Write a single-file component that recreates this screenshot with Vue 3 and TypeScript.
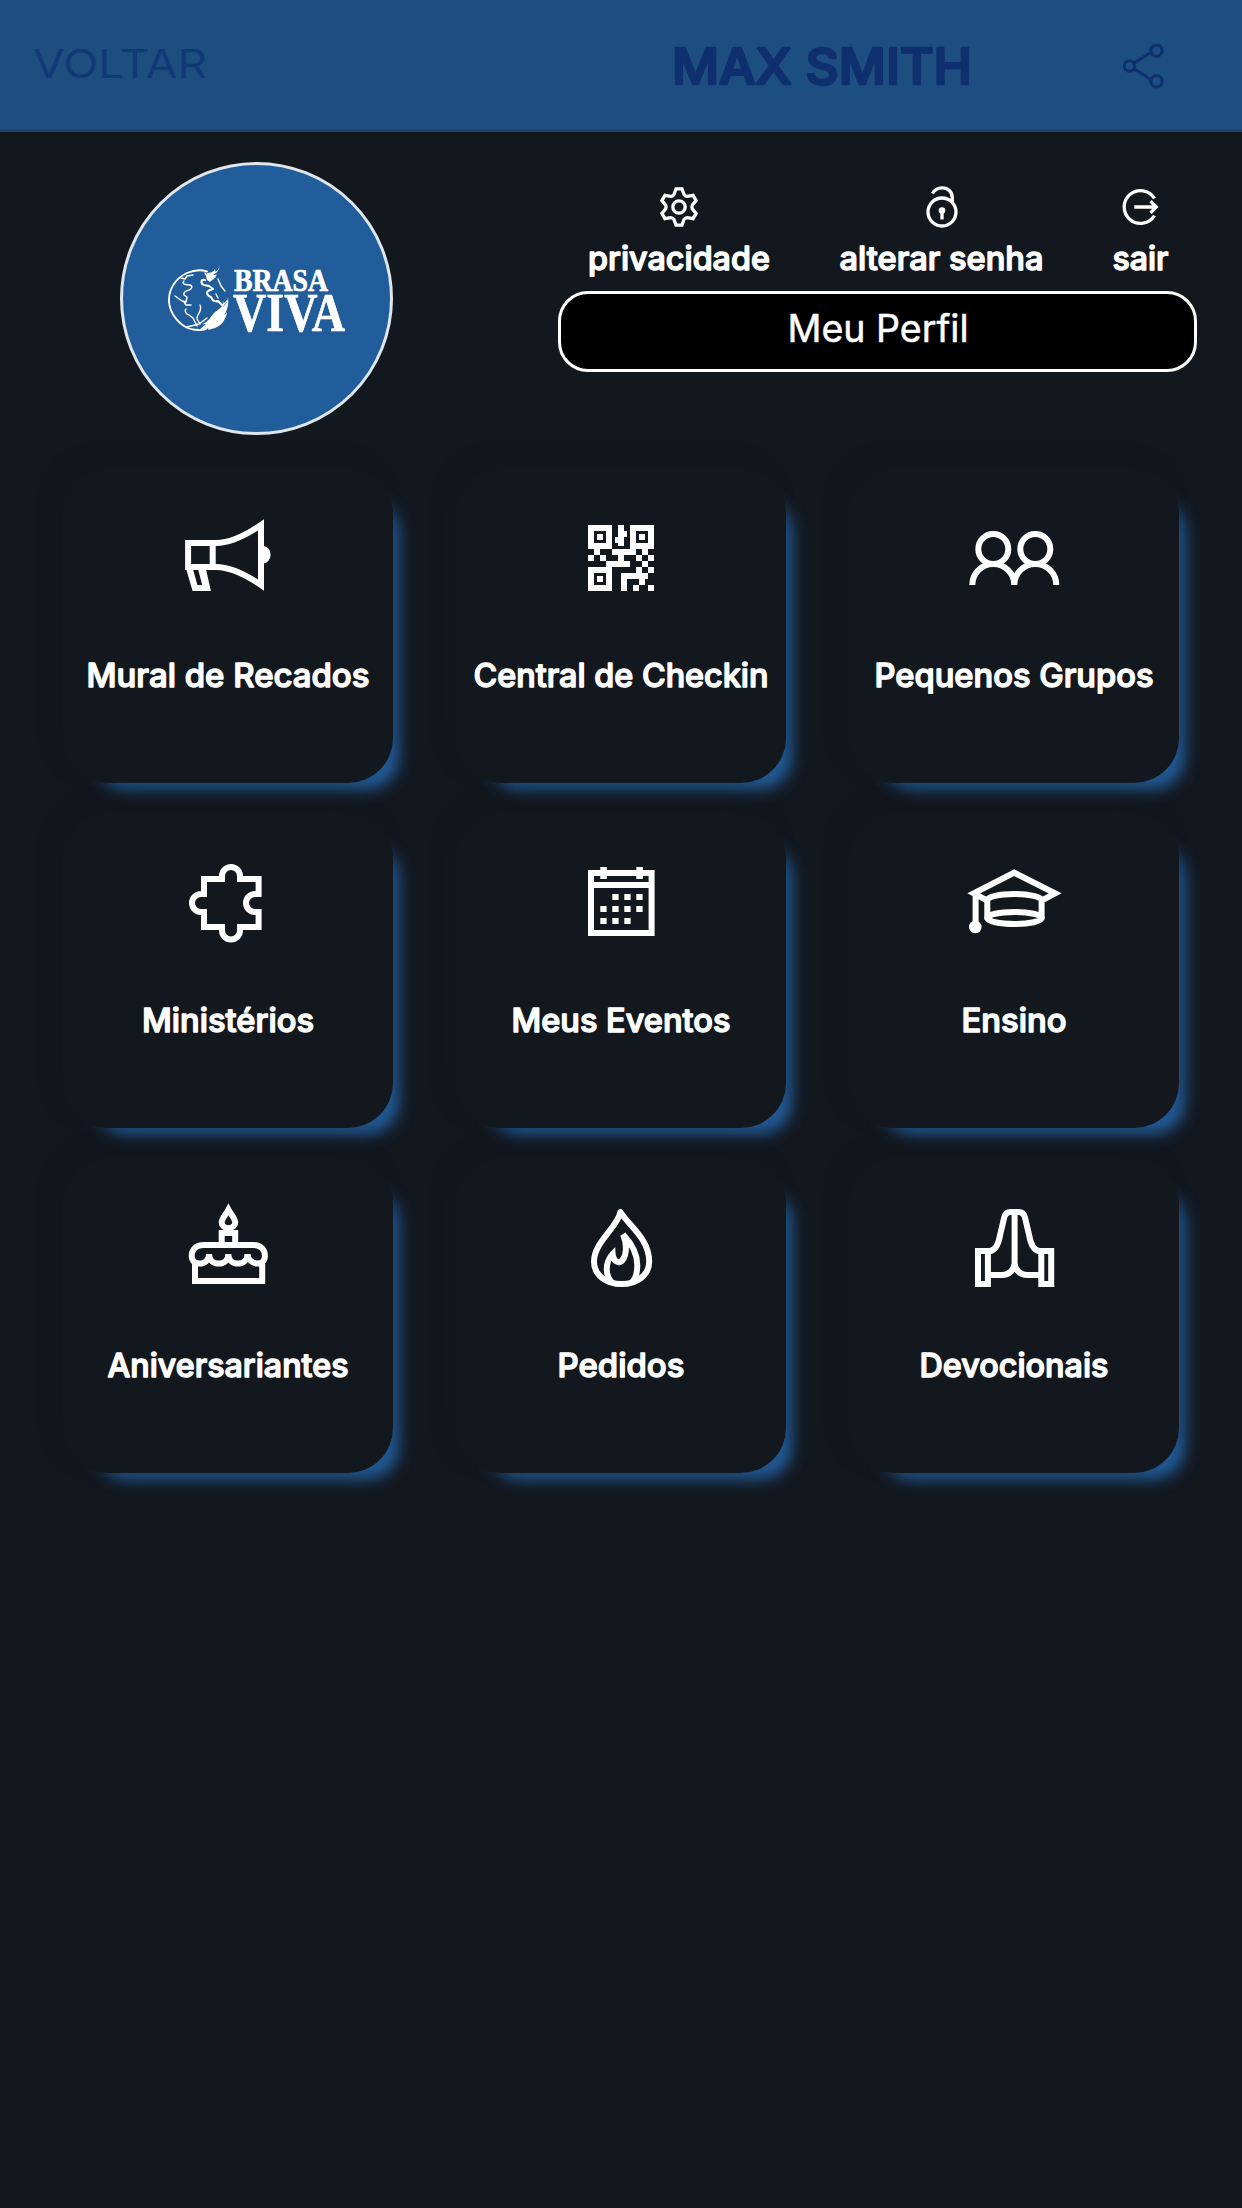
<script setup lang="ts">
interface Tile {
  id: string
  label: string
  width: number
}

// width: drawn length of each label in pixels
const tiles: Tile[] = [
  { id: 'megaphone', label: 'Mural de Recados', width: 283 },
  { id: 'qr', label: 'Central de Checkin', width: 295 },
  { id: 'people', label: 'Pequenos Grupos', width: 279 },
  { id: 'puzzle', label: 'Ministérios', width: 172 },
  { id: 'calendar', label: 'Meus Eventos', width: 219 },
  { id: 'cap', label: 'Ensino', width: 105 },
  { id: 'cake', label: 'Aniversariantes', width: 241 },
  { id: 'fire', label: 'Pedidos', width: 127 },
  { id: 'pray', label: 'Devocionais', width: 189 },
]

const qrCells: number[][] = [
  [15, 5, 2, 7], [17, 7, 1, 2], [14, 9, 1, 2],
  [7, 13, 2, 2], [13, 13, 8, 2], [23, 13, 2, 2],
  [5, 15, 2, 2], [9, 15, 2, 2], [15, 15, 2, 2], [21, 15, 2, 2], [25, 15, 2, 2],
  [11, 17, 8, 2], [23, 17, 2, 2],
  [21, 19, 2, 2], [25, 19, 2, 2],
  [16, 21, 9, 2], [16, 23, 2, 4], [22, 23, 2, 2],
  [20, 25, 2, 2], [25, 25, 2, 2],
]
const finders: number[][] = [[5, 5], [19, 5], [5, 19]]
const days: number[][] = [
  [13, 13], [17, 13], [21, 13],
  [9, 17], [13, 17], [17, 17], [21, 17],
  [9, 21], [13, 21], [17, 21],
]
</script>

<template>
  <div class="page">
    <header class="bar">
      <svg class="back" width="174" height="60">
        <text x="-1" y="43" textLength="174" lengthAdjust="spacingAndGlyphs">VOLTAR</text>
      </svg>
      <svg class="title" width="304" height="60">
        <text x="152" y="49" text-anchor="middle" textLength="300" lengthAdjust="spacingAndGlyphs">MAX SMITH</text>
      </svg>
      <svg class="share" width="44" height="48" viewBox="0 0 44 48">
        <path d="M12.5 21.5 29 11M12.5 26.5 29 37" />
        <circle cx="8.5" cy="24" r="5.2" />
        <circle cx="35.5" cy="8.6" r="5.7" />
        <circle cx="35.5" cy="39.3" r="5.7" />
      </svg>
    </header>

    <section class="profile">
      <div class="avatar">
        <svg width="180" height="72" viewBox="0 0 180 72">
          <g fill="none" stroke="#fff" stroke-linecap="round" stroke-linejoin="round">
            <path stroke-width="1.9" d="M39 6.500C33 4.500 26 5 19 8 8 13 1.500 23 1 33.500 0.500 45 7 55 16 61c4.500 3 10 4 15 4" />
            <path stroke-width="1.4" d="M13 13l4 1 2-3 6-1M16 16c-3 3 2 4 6 4 3 1 2 4-1 5-4 1-6 3-5 5l3 2-1 5-4-1-7-5M16 37l2 3 5 0M18 44c-2 2 0 5 3 6l4 3 4 8M32 40c3 6-4 10-3 14l3 5M19 62l12-3 8-6M50 14l3 7 4 5M55 40l4-4M37 8l2 3M50 33l-2-4" />
            <path stroke-width="2.100" d="M37 15c-5-1-4 4-1 5l5 1 4 3c-4 1-8 3-5 6 1 2 4 1 4 4 1 2 4 3 6 2l4 4" />
          </g>
          <path fill="#fff" d="M52 0c-1 6-3 8-7 9.500 2 1 4 0 4-1-1 4-3 6-5 6.500l-2 2-3-2-1-4 1-3c4 0 6-1 8-4 0 1 1 2 0 3 2-1 4-3 5-7z" />
          <path fill="#fff" d="M60 32c1 8-1 14-4 18 2-1 2-2 3-3-1 8-6 14-12 16l-7 2c1-1 0-2 0-2-2 3-6 3-10 3l8-7c-2 0-4 0-5 1 8-4 9-7 12-11 4-4 9-6 10-10 1-1 0-2 0-3 2 2 1 4 0 6 3-3 5-6 5-10z" />
          <text class="logo" x="66" y="26" font-size="32.500" textLength="94" lengthAdjust="spacingAndGlyphs">BRASA</text>
          <text class="logo" x="65" y="65.500" font-size="54" textLength="112" lengthAdjust="spacingAndGlyphs">VIVA</text>
        </svg>
      </div>

      <div class="account">
        <nav class="actions">
          <a class="action">
            <svg width="40" height="44" viewBox="-20 -22 40 44">
              <path d="M-3-18.200H3L5-12.500Q6.500-10.500 8.300-10.600L14.100-11.600 17.100-6.400 13.300-1.900Q12.600 0 13.300 1.900L17.100 6.400 14.100 11.600 8.300 10.600Q6.500 10.500 5 12.500L3 18.200H-3L-5 12.500Q-6.500 10.500-8.300 10.600L-14.100 11.600-17.100 6.400-13.300 1.900Q-12.600 0-13.300-1.900L-17.100-6.400-14.100-11.600-8.300-10.600Q-6.500-10.500-5-12.500Z" />
              <circle r="6.200" />
            </svg>
            <svg class="caption" width="184" height="44">
              <text x="92" y="33" text-anchor="middle" textLength="182" lengthAdjust="spacingAndGlyphs">privacidade</text>
            </svg>
          </a>
          <a class="action">
            <svg width="40" height="44" viewBox="0 0 40 44">
              <path d="M10.500 8.500C12.500 4.800 16 2.800 20 2.800c6 0 10.300 4 10.300 10V17" />
              <circle cx="20" cy="27" r="14" />
              <circle class="solid" cx="20" cy="25.500" r="3.300" />
              <path d="M20 26v8.500" />
            </svg>
            <svg class="caption" width="206" height="44">
              <text x="102.500" y="33" text-anchor="middle" textLength="204" lengthAdjust="spacingAndGlyphs">alterar senha</text>
            </svg>
          </a>
          <a class="action">
            <svg width="40" height="44" viewBox="-20 -22 40 44">
              <path d="M14.500-8.700A16.400 16.400 0 1 0 14.500 8.700M-5.700 0H16M10.500-5.800 16.300 0 10.500 5.800" />
            </svg>
            <svg class="caption" width="60" height="44">
              <text x="30.500" y="33" text-anchor="middle" textLength="56" lengthAdjust="spacingAndGlyphs">sair</text>
            </svg>
          </a>
        </nav>
        <button class="perfil">
          <svg width="184" height="50">
            <text x="92" y="36" text-anchor="middle" textLength="181" lengthAdjust="spacingAndGlyphs">Meu Perfil</text>
          </svg>
        </button>
      </div>
    </section>

    <main class="grid">
      <article v-for="tile in tiles" :key="tile.id" class="tile">
        <svg class="icon" width="96" height="96" viewBox="0 0 32 32">
          <template v-if="tile.id === 'megaphone'">
            <path d="M2.700 11H12C17.500 11 23 7.700 27 5V25C23 22.300 17.500 19 12 19H2.700ZM10.900 11V19" />
            <path class="solid" fill-rule="evenodd" d="M27.800 12a2.400 2.900 0 0 1 0 5.800zM2 19.500 4.200 27H10.300L8.500 19ZM4.400 20H6.100L7.400 25H5.800Z" />
          </template>
          <template v-else-if="tile.id === 'qr'">
            <g class="solid">
              <path v-for="f in finders" :key="f.join()" fill-rule="evenodd" :d="`M${f[0]} ${f[1]}h8v8h-8zm2 2v4h4v-4zm1 1h2v2h-2z`" />
              <rect v-for="c in qrCells" :key="c.join()" :x="c[0]" :y="c[1]" :width="c[2]" :height="c[3]" />
            </g>
          </template>
          <template v-else-if="tile.id === 'people'">
            <circle cx="9.100" cy="13" r="5" />
            <circle cx="23.100" cy="13" r="5" />
            <path d="M2.100 25a7 7 0 0 1 14 0 7 7 0 0 1 14 0" stroke-linejoin="bevel" />
          </template>
          <template v-else-if="tile.id === 'puzzle'">
            <path d="M8 8H14V7a3 3 0 0 1 6 0V8H26.200V13H25a3 3 0 0 0 0 6H26.200V24H20V25.200a3 3 0 0 1-6 0V24H8V19H7a3 3 0 0 1 0-6H8Z" />
          </template>
          <template v-else-if="tile.id === 'calendar'">
            <path d="M6 6H26.200V26H6ZM6 10H26.200" />
            <g class="solid">
              <rect x="9.100" y="4" width="2.200" height="4" />
              <rect x="21.100" y="4" width="2.200" height="4" />
              <rect v-for="d in days" :key="d.join()" :x="d[0] + 0.1" :y="d[1]" width="2.100" height="2" />
            </g>
          </template>
          <template v-else-if="tile.id === 'cap'">
            <path d="M7.300 15.300 2.600 12.800 16.100 5.900 29.700 12.800 25 15.300M3.200 13V23M7.100 21.500V15C7.100 14 11.100 13 16.100 13S25.200 14 25.200 15V21.500" />
            <ellipse cx="16.150" cy="21" rx="9.050" ry="2" />
            <circle class="solid" cx="3.100" cy="24" r="2.100" />
          </template>
          <template v-else-if="tile.id === 'cake'">
            <path d="M8 15H24.300C27.200 15 28.300 16.700 28.300 18.700 28.300 20.300 27.200 21.200 25.800 21.200S22.500 20 22.500 18C22.500 20 21.100 21.200 19.300 21.200S16.100 20 16.100 18C16.100 20 14.700 21.200 12.900 21.200S9.700 20 9.700 18C9.700 20 8.200 21.200 6.600 21.200S3.900 20.300 3.900 18.700C3.900 16.700 5.100 15 8 15ZM5 20.500V27H27.400V20.500M13.900 14.500V11H18.400V14.500" />
            <path d="M16.150 3.200C15.200 5 13.900 6.200 13.900 7.500 13.900 8.500 14.900 9.400 16.150 9.400S18.400 8.500 18.400 7.500C18.400 6.200 17.100 5 16.150 3.200Z" />
          </template>
          <template v-else-if="tile.id === 'fire'">
            <path d="M15.800 4C15 9 7 14 7 20.500 7 25 11 28 16.200 28S25.400 25 25.400 20.500C25.400 13 19 9 15.800 4Z" stroke-linejoin="round" />
            <path d="M13 27.500C10.500 25 10.800 20.500 13.200 18 13.300 19.700 14.300 21 15.700 20.700 17.900 19.500 18.200 15 16.700 11.500 19.500 14.500 21.700 18.500 21.400 22.500 21.300 25 20.700 26.500 19.600 27.500" />
          </template>
          <template v-else>
            <path d="M4 17H7.300V28H4ZM25.100 17H28.400V28H25.100ZM7.500 17.200C10 17 11 14 11.400 11.500L12.700 6C13 4.700 13.800 4 14.800 4H17.600C18.600 4 19.400 4.700 19.700 6L21 11.500C21.400 14 22.400 17 24.900 17.200" />
            <path d="M16.200 4V21C16.200 23.200 14.300 25 12 25H7.800M16.200 21C16.200 23.200 18.100 25 20.400 25H24.600" />
          </template>
        </svg>
        <svg class="caption" width="306" height="48">
          <text x="153" y="34" text-anchor="middle" :textLength="tile.width" lengthAdjust="spacingAndGlyphs">{{ tile.label }}</text>
        </svg>
      </article>
    </main>
  </div>
</template>

<style>
body {
  margin: 0;
  background: #13181f;
}
</style>

<style scoped>
.page {
  width: 1242px;
  min-height: 2208px;
  background: #13181f;
  font-family: Inter, "Noto Sans", sans-serif;
}
svg {
  display: block;
  flex: none;
  overflow: visible;
}
.bar {
  box-sizing: border-box;
  height: 132px;
  display: grid;
  grid-template-columns: 558px 528px 114px;
  justify-items: center;
  background: #1d4e80;
  border-bottom: 3px solid #1f456b;
}
.back {
  justify-self: start;
  margin: 35px 0 0 34px;
  fill: #103a76;
  font-size: 40px;
  font-weight: 400;
}
.title {
  margin-top: 35px;
  fill: #0f2f6e;
  stroke: #0f2f6e;
  stroke-width: 2.6px;
  stroke-linejoin: round;
  font-size: 50px;
  font-weight: 500;
}
.share {
  margin-top: 42px;
  fill: none;
  stroke: #0f2f6e;
  stroke-width: 3px;
}
.profile {
  display: flex;
  height: 336px;
}
.avatar {
  box-sizing: border-box;
  flex: none;
  width: 273px;
  height: 273px;
  margin: 30px 0 0 120px;
  padding: 100px 0 0 45px;
  border: 3px solid #dfe6ec;
  border-radius: 50%;
  background: #225d9b;
}
.logo {
  fill: #fff;
  stroke: #fff;
  stroke-width: 0.7px;
  font-family: "Liberation Serif", serif;
  font-weight: 700;
}
.account {
  width: 639px;
  margin: 53px 0 0 165px;
}
.actions {
  display: flex;
  gap: 68px;
  height: 106px;
  padding-left: 29px;
}
.action {
  display: flex;
  flex-direction: column;
  align-items: center;
  gap: 8px;
  fill: none;
  stroke: #fff;
  stroke-width: 3.3px;
}
.action:last-child {
  margin-left: -3px;
}
.caption text {
  fill: #fff;
  stroke: #fff;
  stroke-width: 1.4px;
  stroke-linejoin: round;
  font-size: 32.500px;
  font-weight: 500;
}
.perfil {
  box-sizing: border-box;
  display: flex;
  justify-content: center;
  align-items: flex-start;
  width: 639px;
  height: 81px;
  padding: 12px 0 0;
  border: 3px solid #fff;
  border-radius: 30px;
  background: #000;
  font-family: inherit;
}
.perfil text {
  fill: #fff;
  stroke: #fff;
  stroke-width: 0.5px;
  stroke-linejoin: round;
  font-size: 37.500px;
  font-weight: 400;
}
.grid {
  display: grid;
  grid-template-columns: repeat(3, 330px);
  grid-auto-rows: 315px;
  gap: 30px 63px;
  padding-left: 63px;
}
.tile {
  box-sizing: border-box;
  display: flex;
  flex-direction: column;
  align-items: center;
  padding-top: 42px;
  border-radius: 45px;
  background: #13181f;
  box-shadow: -9px -9px 15px #13181f, 19px 19px 15px -13px #225d9b;
}
.icon {
  margin-right: 1px;
  fill: none;
  stroke: #fff;
  stroke-width: 2;
}
.solid {
  fill: #fff;
  stroke: none;
}
.tile .caption {
  margin-top: 47px;
}
</style>
